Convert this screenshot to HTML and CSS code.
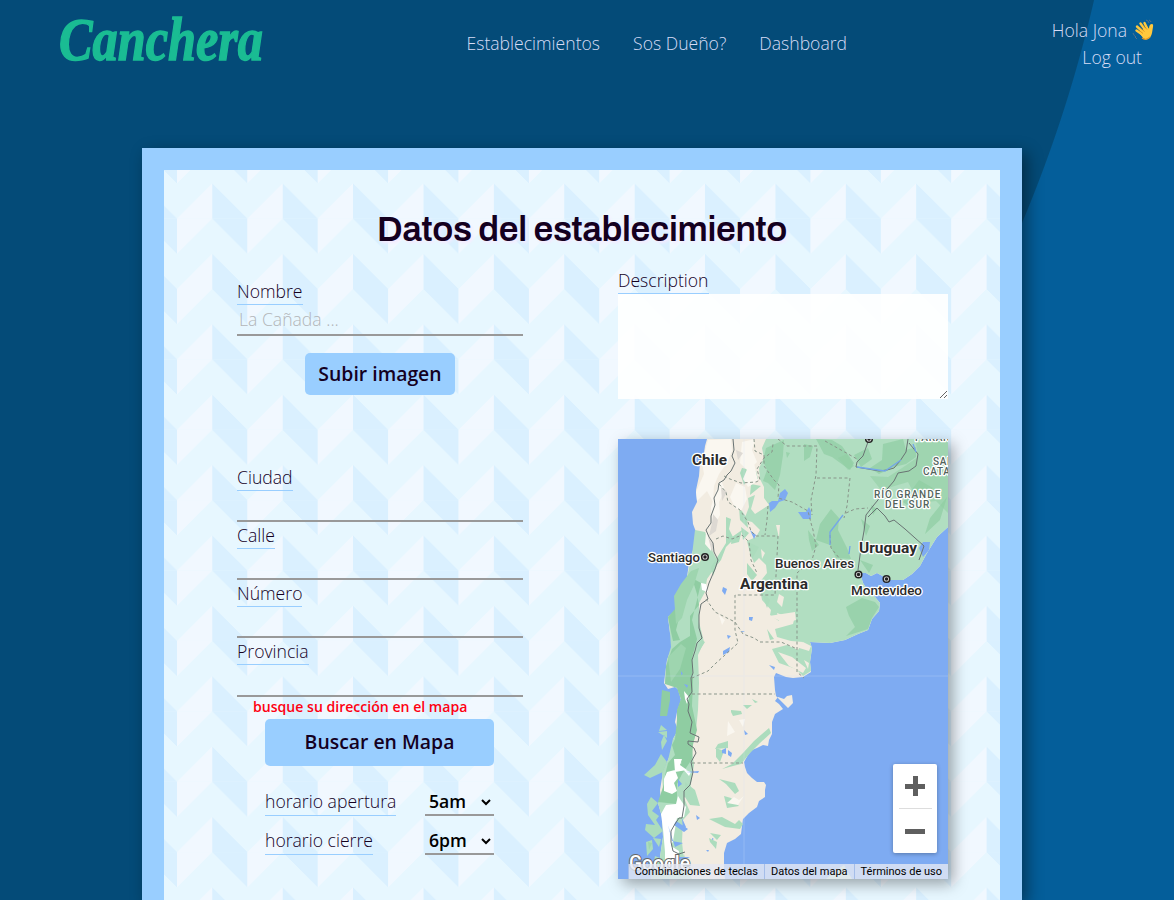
FILE: index.html
```html
<!DOCTYPE html>
<html lang="es">
<head>
<meta charset="utf-8">
<title>Canchera</title>
<link rel="stylesheet" href="styles.css">
</head>
<body>
<header class="header">
  <svg class="logo" viewBox="0 0 210 60" role="img" aria-label="Canchera"><text x="1" y="47" textLength="204" lengthAdjust="spacingAndGlyphs">Canchera</text></svg>
  <nav class="nav"><a>Establecimientos</a><a>Sos Dueño?</a><a>Dashboard</a></nav>
  <div class="user">
    <span class="hello">Hola Jona
      <svg class="wave" viewBox="0 0 22 22"><g fill="none" stroke="#ffc83d" stroke-width="2.400" stroke-linecap="round"><path d="M11 16 4.500 11.500M12 14 5 7.500M14 12 8.500 4.500M16 11 12.500 4"/></g><path fill="#ffc83d" d="M7 13 15 8 17 10Q17 5 20 5 21.500 5 21 8L20 14Q19 19.500 14.500 20.500 11 20.500 7 13Z"/><path d="M10 19Q14 22 18 18" fill="none" stroke="#e59b24" stroke-width="1.200"/><path d="M6.500 11 11 14.500M8 8.500 12.500 12.500M11.500 6.500 15 10.500" stroke="#c97b12" stroke-width=".6"/><path d="M14 1Q17 2 17 4M1 14Q2 17 4 18M3 18 5 20M17 1Q19 2 19 3" fill="none" stroke="#53718a"/></svg>
    </span>
    <a class="logout">Log out</a>
  </div>
</header>
<main class="panel">
  <h1 class="title">Datos del establecimiento</h1>
  <form class="form">
    <section class="left">
      <div class="field"><label>Nombre</label><input type="text" placeholder="La Cañada ..."></div>
      <button type="button" class="btn upload">Subir imagen</button>
      <div class="field"><label>Ciudad</label><input type="text"></div>
      <div class="field"><label>Calle</label><input type="text"></div>
      <div class="field"><label>Número</label><input type="text"></div>
      <div class="field last"><label>Provincia</label><input type="text"></div>
      <p class="error">busque su dirección en el mapa</p>
      <button type="button" class="btn search">Buscar en Mapa</button>
      <div class="hours"><label>horario apertura</label><select><option>5am</option></select></div>
      <div class="hours"><label>horario cierre</label><select><option>6pm</option></select></div>
    </section>
    <section class="right">
      <label>Description</label>
      <textarea class="description"></textarea>
      <div class="map">
        <svg class="terrain" viewBox="618 439 330 440">
          <rect x="618" y="439" width="330" height="440" fill="#7eabf2"/>
          <!-- mainland -->
          <path fill="#f2ece1" d="M707 439 705 446 704 453 700 463 699 476 696 490 697 502 692 512 693 524 696 532 694 547 689 563 687 577 682 588 678 597 676 610 668 617 670 633 673 641 671 650 667 660 665 675 664 683 668 689 675 687 679 690 681 700 677 712 675 722 678 730 673 739 672 751 668 760 663 772 660 790 661 803 658 803 662 817 663 837 660 857 664 879H725L724 871 724 861 724 853 727 843 735 839 741 834 742 826 743 819 749 813 757 807 759 801 765 797 765 790 766 785 764 782 757 782 752 778 747 773 745 767 744 762 748 755 752 750 757 748 763 745 768 746 769 740 772 734 772 722 775 714 783 709 779 704 775 701 778 697 784 699 787 696 792 695 793 703 788 708 776 696 775 690 774 677 776 673 786 677 793 678 803 677 811 672 810 662 812 648 810 642 830 643 845 640 858 634 868 630 872 619 879 611 880 603 875 597 868 591 863 583 860 573 866 573 871 576 877 573 890 580 903 580 912 574 920 566 927 553 937 537 948 527V439Z"/>
          <!-- lowland vegetation -->
          <path fill="#b1dec1" d="M766 439 762 448 764 458 759 468 760 479 764 487 764 498 769 505 755 514 751 509 755 495 748 498 749 507 744 520 752 522 760 530 756 537 747 541 750 553 754 563 759 558 766 565 767 573 759 583 762 600 771 610 770 615 779 621 777 613 785 616 794 620 793 624 775 629 777 637 791 641 803 642 798 650 787 645 772 649 779 663 796 669 803 676 811 671 810 662 812 648 810 642 830 643 845 640 858 634 868 630 872 619 879 611 880 603 875 597 868 591 863 583 860 573 866 573 871 576 877 573 890 580 903 580 912 574 920 566 927 553 937 537 948 527V439Z"/>
          <path fill="#b1dec1" d="M695 530 705 532 709 541 713 552 717 560 714 569 707 579 705 592 699 603 699 622 704 642 698 655 699 683 698 710 696 730 692 750 694 765 690 790 684 798 690 812 683 820 682 842 686 879H664L660 857 663 837 662 817 658 803 663 790 662 773 668 760 673 739 678 730 677 712 681 700 677 687 665 683 667 660 671 647 670 633 668 617 676 610 678 597 687 577 692 555Z"/>
          <g fill="#8fcda2">
            <path d="M668 617 675 609 679 618 676 630 680 640 673 641 671 632ZM692 578 701 583 697 600 692 620 697 639 692 658 693 680 692 706 697 730 693 744 692 759 682 774 677 784 668 783 665 775 668 763 675 755 672 745 675 739 677 720 677 710 681 699 677 688 665 684 666 666 672 649 680 642 690 636 690 616 699 605 697 594ZM662 690 670 692 670 700 667 716 660 716ZM665 781 677 781 677 804 658 802Z"/>
            <path d="M766 448 784 440 783 455 780 475 775 490 768 483 763 481 767 470 763 461ZM816 439 832 440 842 446 854 463 850 470 832 457 824 454ZM804 444 813 446 810 457 804 461ZM883 444 903 439 906 450 916 447 916 457 906 464 894 467 879 474 870 468 882 460ZM854 455 868 448 872 459 861 467ZM831 509 839 518 838 530 847 548 851 559 836 558 830 545 816 540 820 524ZM808 530 819 545 812 551 809 540ZM846 607 862 598 875 602 879 607 872 618 868 629 846 636 855 627 849 616ZM861 519 870 526 866 536ZM871 505 877 509 873 515ZM930 518 947 497 940 520 925 534ZM786 452 790 453 787 458ZM860 560 873 565 869 573ZM919 480 933 488 920 498 911 508 903 502Z" opacity=".7"/>
            <path d="M870 476 888 477 902 468 918 457 916 443 948 439V513L936 501 919 503 908 482 881 490ZM838 458 848 470 854 466 847 454Z" opacity=".55"/>
          </g>
          <g fill="#acdcbd">
            <path d="M742 468 756 471 758 479 748 478 744 485 740 473ZM751 484 761 486 750 495ZM726 517 731 519 729 529 734 539 726 547 721 560 717 565 713 576 711 567 718 556 726 543ZM739 507 747 518 748 528 740 520ZM732 537 742 530 739 542 731 544ZM741 527 749 533 743 540ZM748 542 759 547 752 559ZM747 563 757 575 752 581 747 574ZM761 590 770 600 767 608ZM767 629 774 639 770 640ZM701 640 705 642 698 653ZM731 710 741 711 742 714 733 716 731 712ZM743 705 752 705 747 709ZM752 699 758 702 755 703ZM718 744 728 741 728 748 715 749ZM716 748 724 751 720 762 716 757ZM722 769 732 764 743 753 754 741 769 728 771 733 760 743 750 753 741 764 733 766ZM719 779 735 783 739 791 735 794 726 784ZM724 796 731 798 739 806 727 808ZM709 819 722 817 735 824 739 820 743 824 740 829 725 827ZM710 833 721 835 717 840ZM709 838 717 842 716 849 710 842ZM685 782 695 790 700 806 690 805 685 797Z"/>
            <path d="M662 750 667 741 664 735 661 742ZM655 765 661 754 667 762 663 772 650 778 644 775ZM658 732 667 731 667 738ZM661 725 667 730 659 731ZM651 797 658 803 652 811 659 816 656 820 663 831 654 838 645 830 646 824 655 825 648 815 647 804ZM646 842 652 840 653 849 647 856ZM653 838 661 839 659 847ZM655 856 665 860 664 879H651ZM684 854 686 863 692 879H677Z"/>
          </g>
          <path fill="#9ed5af" d="M674 596 681 584 691 571 699 568 694 585 687 600 682 618 676 624ZM668 657 681 644 686 648 680 669 671 682ZM648 842 652 843 649 850Z"/>
          <path fill="#f2ece1" d="M776 525 780 525 779 538ZM761 549 765 553 762 559ZM779 594 784 597 782 607 777 602ZM769 616 795 612 796 620 785 623ZM778 652 792 657 806 668 803 673 789 666ZM803 642 811 646 809 651 796 647ZM804 660 809 663 808 669Z"/>
          <path fill="#faf7f0" d="M708 440 731 439 732 451 727 463 719 474 714 486 713 502 707 491 697 501 696 492 704 474 702 462ZM742 442 755 439 752 450 757 462 748 471 740 463ZM736 483 745 487 747 499 741 511 735 508 730 497ZM706 532 711 543 711 551 705 544ZM721 480 725 490 719 502 720 515 712 530 711 507 716 491ZM754 463 758 481 748 487 743 479 748 467ZM728 721 735 732 727 736ZM739 720 745 719 743 727ZM727 803 734 797 739 800 744 796 738 805ZM719 615 725 620 722 625Z"/>
          <path fill="#ddd9d3" d="M713 514 718 520 716 531 709 536 712 523ZM708 537 714 546 712 552ZM736 450 743 453 738 460ZM721 487 727 492 722 501Z"/>
          <!-- ice fields -->
          <path fill="#fff" d="M684 691 689 697 687 704 685 699ZM674 759 682 759 680 765 687 770 675 772ZM667 772 675 770 678 778 674 783 677 791 672 794 664 791 664 779ZM675 761 682 763 675 765ZM683 769 691 772 689 776ZM666 805 676 804 678 796 682 802 686 807 684 817 677 818 675 829 673 841 671 846 679 851 678 860 686 866 679 872 665 869 665 852 663 829 661 814ZM701 583 706 584 708 592 702 590Z"/>
          <g fill="#7eabf2">
            <path d="M769 503 772 501 778 501 780 493 785 489 788 493 785 500 779 502 775 508 770 512ZM798 512 806 512 809 507 811 511 811 519 803 519ZM919 548 923 542 930 542 929 550 923 557ZM723 587 727 589 725 595 722 591ZM723 651 730 647 729 652 723 655ZM749 617 753 617 752 621 749 620ZM750 530 756 535 754 539ZM727 635 731 636 728 639ZM740 631 745 631 743 632ZM769 665 775 667 774 670ZM722 750 726 748 726 754 722 753ZM728 750 732 753 731 757 728 755ZM744 730 748 734 745 735ZM676 821 688 829 684 832 674 825ZM668 825 672 841 683 843 675 847ZM686 772 699 771 698 773ZM676 857 690 857 682 861 677 860ZM696 815 700 818 697 820ZM712 838 714 839 712 840ZM706 850 709 850 708 852ZM681 671 683 674 681 675ZM684 684 688 685 687 688ZM678 779 682 784 678 787ZM682 818 686 827 683 831Z"/>
          </g>
          <!-- borders -->
          <g fill="none" stroke="#697373" stroke-width="1"><path d="M733 439 734 450 732 456 735 463 731 471 727 475 724 480 719 483 718 490 714 498 715 505 711 516 711 523 706 530 709 537 713 543 714 552 718 560 715 569 709 583 706 593 708 599 701 604 699 615 699 628 702 638 697 643 695 651 692 660 693 673 691 678 692 692 687 699 689 704 688 711 692 722 690 733 699 737 698 742 688 741 688 744 694 748 696 753 691 762 693 772 690 785 684 791 684 806 682 818 679 818 675 824 671 831 671 842 673 851 679 854 685 852"/><path d="M869 439 863 456 857 462 856 467 868 469 879 471 887 470 894 468 900 461 906 452 908 439M909 443 918 454 916 466 909 471 898 473 894 481 882 495 873 506 866 515 864 531 861 548 858 570M868 517 877 508 885 516 889 522 894 520 905 529 924 546 919 560"/></g>
          <path fill="none" stroke="#89958a" stroke-width="1" stroke-dasharray="3 2.500" d="M724 476 730 479 741 483 756 482 760 480 757 469 764 458 772 452 773 444M719 484 726 492 728 502 740 510 748 522 751 531 756 536 778 536 775 595H735V630L738 643 725 655 715 664 708 671 692 678M754 439 755 451 764 455 764 466 774 480 779 485 778 498 792 502 808 511 811 523 813 530 816 546 812 560 797 573V672L804 678M768 506 767 520 765 535M778 439 787 446H817L816 475 811 500 812 515M817 478H850L847 506 844 518M846 513 855 509 868 508M706 599 715 612 735 622 743 634 754 638 760 642 781 642 795 648M692 694H775M692 763H743M825 441 857 459M716 539 723 536 732 539 742 535 749 542 751 560 757 573M830 535 831 548 840 559 854 569"/>
          <path d="M618 676H948M744 439V879" stroke="#d5e3fb" opacity=".25"/>
          <path fill="none" stroke="#74a6e9" stroke-width="1.300" d="M857 467 885 471 901 460M843 515 830 532 830 545M850 546 849 554M916 452 913 444"/>
          <g class="places">
            <text x="692" y="465" class="country" textLength="35" lengthAdjust="spacingAndGlyphs">Chile</text><text x="740" y="588.500" class="country" textLength="68" lengthAdjust="spacingAndGlyphs">Argentina</text><text x="859" y="553" class="country" textLength="58" lengthAdjust="spacingAndGlyphs">Uruguay</text>
            <text x="648" y="562" textLength="52" lengthAdjust="spacingAndGlyphs">Santiago</text><text x="775" y="568" textLength="79" lengthAdjust="spacingAndGlyphs">Buenos Aires</text><text x="851" y="595" textLength="71" lengthAdjust="spacingAndGlyphs">Montevideo</text>
            <g class="region"><text x="874" y="498" textLength="67">RÍO GRANDE</text><text x="885" y="508" textLength="45">DEL SUR</text><text x="933" y="464.500">SANTA</text><text x="923" y="474.500">CATARINA</text><text x="915" y="441">PARANÁ</text></g>
          </g>
          <g fill="#d8d8d8" stroke="#222" stroke-width="1.500"><circle cx="705" cy="557" r="3.300"/><circle cx="858.500" cy="574.500" r="3.300"/><circle cx="886.500" cy="579" r="3.300"/><circle cx="869" cy="439" r="3.300"/></g><g fill="#222"><circle cx="705" cy="557" r="1.700"/><circle cx="858.500" cy="574.500" r="1.700"/><circle cx="886.500" cy="579" r="1.700"/><circle cx="869" cy="439" r="1.700"/></g>
          <path fill="#c9e8d2" d="M826 879 835 871 844 865 852 879Z"/>
          <text x="629" y="870" class="google" textLength="61" lengthAdjust="spacingAndGlyphs">Google</text>
        </svg>
        <div class="zoom"><span class="plus"></span><i></i><span class="minus"></span></div>
        <div class="legal"><span>Combinaciones de teclas</span><span>Datos del mapa</span><span>Términos de uso</span></div>
      </div>
    </section>
  </form>
</main>
</body>
</html>
```
FILE: styles.css
```css
* { box-sizing: border-box; }
body { margin: 0; height: 900px; overflow: hidden; font: 300 17.6px/24px "Open Sans", sans-serif; color: #14001f; background: radial-gradient(circle 1366px at -237px -307px, #044b78 1365.500px, #045e9a 1366.500px); }
.header { height: 148px; display: grid; grid-template-columns: 466px 1fr 154px; align-items: start; color: #d6dcf6; }
.logo { width: 210px; height: 60px; margin: 13px 0 0 58px; overflow: visible; }
.logo text { fill: #1abc93; stroke: #1abc93; stroke-width: 1.500px; font: italic 700 61px "Liberation Serif", serif; }
.nav { display: flex; gap: 33px; padding: 31px 0 0 .5px; }
.user { display: flex; flex-direction: column; align-items: flex-end; padding: 17px 20px 0 0; line-height: 27px; white-space: nowrap; }
.hello { display: flex; gap: 5px; }
.wave { width: 22px; height: 22px; margin-top: 2px; }
.logout { margin-right: 12px; }
.panel { width: 880px; height: 752px; margin-left: 142px; border: 22px solid #99ceff; border-bottom: 0; box-shadow: 5px 5px 15px rgba(0,0,0,.42); background-color: #e7f7ff; background-image: linear-gradient(135deg,#f1f8ff 25%,transparent 25%), linear-gradient(315deg,#f1f8ff 25%,transparent 25%), linear-gradient(45deg,#daf0ff 25%,transparent 25%), linear-gradient(225deg,#daf0ff 25%,transparent 25%); background-size: 70.400px 70.400px; background-position: 13px 48.600px, -22.200px 48.600px, 48.200px 48.600px, 13px 48.600px; }
.title { margin: 0; padding-top: 38px; height: 98px; font: 600 35.200px/42px Archivo, "Liberation Sans", sans-serif; letter-spacing: -.33px; text-align: center; text-shadow: 2px 2px 3px #f5eaff; }
.form { display: grid; grid-template-columns: 286px 330px; column-gap: 95px; padding-left: 73px; align-items: start; }
.left { display: flex; flex-direction: column; padding-top: 10px; }
label { border-bottom: 1px solid #99ceff; justify-self: start; }
.field { display: grid; height: 58px; grid-template-rows: 27px 31px; }
.field label { line-height: 26px; }
.last { height: 59px; grid-template-rows: 27px 32px; }
input { border: 0; border-bottom: 2px solid #999; background: none; font: inherit; padding: 0 2px 2px; width: 100%; }
input::placeholder { color: #b2b5b8; opacity: 1; }
.btn { border: 0; border-radius: 5px; background: #99ceff; color: #14001f; font: 600 19.400px "Open Sans", sans-serif; padding: 0 0 2px; align-self: center; }
.upload { width: 150px; height: 42px; margin: 17px 0 69px; }
.error { margin: 0 0 0 16px; height: 22px; line-height: 20px; color: #ff0012; font-size: 14.080px; font-weight: 600; }
.search { width: 229px; height: 47px; margin: 0 0 24px 28px; align-self: flex-start; }
.hours { width: 229px; height: 26px; margin: 0 0 13px 28px; display: flex; justify-content: space-between; }
.hours label { line-height: 23px; height: 26px; }
select { width: 69px; height: 28px; margin-top: -2px; border: 0; border-bottom: 2px solid #999; background: none; font: 600 17.600px "Open Sans", sans-serif; color: #000; padding: 0; }
.right { display: grid; grid-template-rows: 26px 105px 480px; }
.right label { line-height: 25px; height: 26px; }
.description { width: 330px; height: 105px; border: 0; background: rgba(255,255,255,.9); resize: both; }
.map { width: 330px; height: 440px; margin-top: 40px; position: relative; box-shadow: 5px 5px 14px rgba(0,0,0,.35); }
.terrain { display: block; width: 330px; height: 440px; }
.places { font: 500 13.400px Roboto, sans-serif; fill: #2b2b2b; stroke: #fff; stroke-width: 2.500px; paint-order: stroke; stroke-linejoin: round; }
.country { font-size: 15.500px; font-weight: 700; }
.region { font-size: 10px; fill: #53635c; letter-spacing: .7px; }
.google { font: 500 20px Roboto, sans-serif; fill: #fff; stroke: #666; stroke-width: 2px; paint-order: stroke; }
.zoom { position: absolute; right: 11px; top: 325px; width: 44px; height: 89px; padding: 0 5px 0 6px; border-radius: 2px; background: #fff; box-shadow: 0 1px 4px rgba(0,0,0,.3); display: grid; grid-template-rows: 44px 1px 44px; justify-items: center; align-items: center; }
.zoom i { width: 33px; height: 1px; background: #ddd; }
.plus, .minus { width: 20px; height: 20px; margin-right: 1px; background: linear-gradient(#5f5f5f,#5f5f5f) center / 20px 5px no-repeat; }
.plus { background: linear-gradient(#5f5f5f,#5f5f5f) center / 20px 5px no-repeat, linear-gradient(#5f5f5f,#5f5f5f) center / 5px 20px no-repeat; }
.legal { position: absolute; right: 0; bottom: 0; display: flex; height: 15px; font: 400 11px/15px Roboto, sans-serif; color: #000; }
.legal span { padding: 0 6px; background: rgba(229,233,243,.8); border-left: 1px solid #a4bde9; white-space: nowrap; }
```
